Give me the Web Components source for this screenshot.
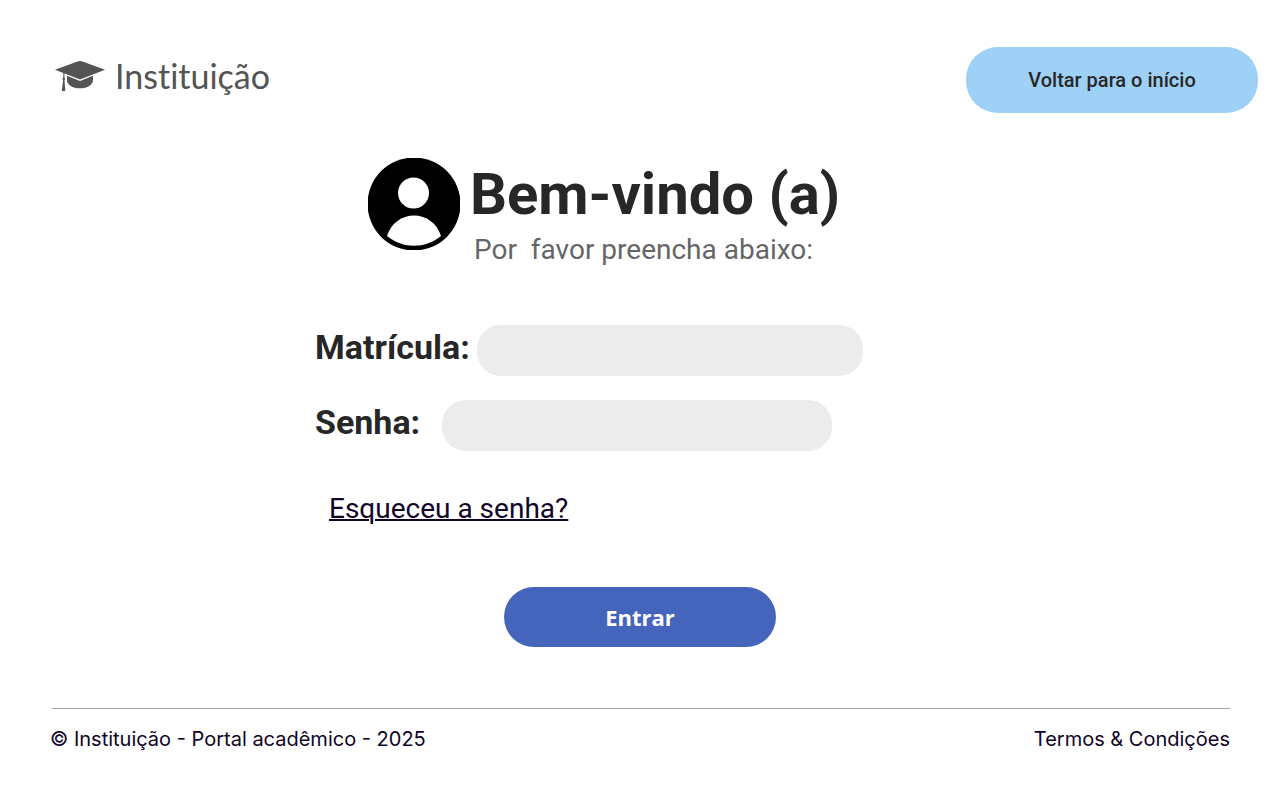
<!DOCTYPE html>
<html lang="pt-BR">
<head>
<meta charset="utf-8">
<meta name="viewport" content="width=device-width, initial-scale=1">
<title>Portal acadêmico</title>
<style>
  body { margin: 0; background: #fff; color: #272727; font-family: Roboto, "Liberation Sans", sans-serif; }
</style>
</head>
<body>
<portal-page>
  <brand-logo slot="brand">Instituição</brand-logo>
  <pill-button slot="action">Voltar para o início</pill-button>
  <login-panel>
    <welcome-banner slot="welcome">
      Bem-vindo (a)
      <span slot="hint">Por&nbsp; favor preencha abaixo:</span>
    </welcome-banner>
    <form-field name="matricula" type="text">Matrícula:</form-field>
    <form-field name="senha" type="password">Senha:</form-field>
    <text-link slot="help" href="#recuperar">Esqueceu a senha?</text-link>
    <pill-button slot="submit" variant="primary">Entrar</pill-button>
  </login-panel>
  <page-footer slot="footer">
    © Instituição - Portal acadêmico - 2025
    <text-link slot="terms" variant="plain" href="#termos">Termos &amp; Condições</text-link>
  </page-footer>
</portal-page>

<script>
function define(name, markup, setup) {
  const template = document.createElement('template');
  template.innerHTML = markup;
  customElements.define(name, class extends HTMLElement {
    constructor() {
      super();
      this.attachShadow({ mode: 'open' }).append(template.content.cloneNode(true));
    }
    connectedCallback() {
      if (setup) setup(this, this.shadowRoot);
    }
  });
}

define('portal-page', `
  <style>
    :host { display: flex; flex-direction: column; min-height: 100vh; }
    header { display: flex; justify-content: space-between; align-items: flex-start; padding: 47px 22px 0 55px; }
    main { display: flex; justify-content: center; padding: 45px 24px 61px; }
  </style>
  <header><slot name="brand"></slot><slot name="action"></slot></header>
  <main><slot></slot></main>
  <slot name="footer"></slot>`);

define('brand-logo', `
  <style>
    :host { display: flex; align-items: center; gap: 10px; height: 58px; color: #545454;
      font: 34px/40px Lato, sans-serif; font-variant-ligatures: none; }
    svg { display: block; width: 50px; height: 30px; }
  </style>
  <svg viewBox="0 0 50 30" fill="currentColor" aria-hidden="true">
    <path d="M0 8.7 22.5.5Q25-.4 27.5.5L50 8.7 25 18.5Z"/>
    <path d="M12 14.8 25 20 38 14.8V19c0 4.8-5.5 8.3-13 8.3S12 23.800 12 19Z"/>
    <path d="M8.300 11 9.400 11.500V16.500c.9.6.9 1.900.1 2.500L10.300 30H6.800L8.100 19c-.8-.7-.8-1.900.2-2.500Z"/>
  </svg>
  <span><slot></slot></span>`);

define('pill-button', `
  <style>
    :host { display: block; --bg: #9fd0f6; --fg: #272727; }
    :host([variant="primary"]) { --bg: #4564bc; --fg: #fff; }
    button { display: block; width: 292px; height: 66px; padding: 0; border: 0; border-radius: 32px;
      background: var(--bg); color: var(--fg); font: 500 20px/24px Roboto, sans-serif; cursor: pointer; }
    :host([variant="primary"]) button { width: 272px; height: 60px; border-radius: 30px; font: 700 22px/28px "Open Sans", sans-serif; }
  </style>
  <button type="button"><slot></slot></button>`);

define('login-panel', `
  <style>
    :host { display: block; width: 100%; max-width: 650px; }
    form { display: flex; flex-direction: column; margin: 0; }
    .fields { display: flex; flex-direction: column; gap: 24px; padding-top: 55px; }
    .help { padding: 40px 14px 0; }
    .submit { display: flex; justify-content: center; padding-top: 60px; }
  </style>
  <form>
    <slot name="welcome"></slot>
    <div class="fields"><slot></slot></div>
    <div class="help"><slot name="help"></slot></div>
    <div class="submit"><slot name="submit"></slot></div>
  </form>`);

define('welcome-banner', `
  <style>
    :host { display: flex; align-items: flex-start; gap: 10px; padding-left: 53px; }
    svg { display: block; flex: none; width: 92px; height: 92px; }
    h1 { margin: 0; font-size: 58px; line-height: 72px; font-weight: 700; white-space: nowrap; }
    p { margin: 0; padding-left: 4px; color: #666; font-size: 28px; line-height: 40px; }
  </style>
  <svg viewBox="0 0 92 92" aria-hidden="true">
    <circle cx="46" cy="46" r="46.500" fill="#000"/>
    <circle cx="45.500" cy="35" r="15.500" fill="#fff"/>
    <path d="M19 78C23 65 34 57.500 46 57.500S69 65 73 78C57 91 35 91 19 78Z" fill="#fff"/>
  </svg>
  <div>
    <h1><slot></slot></h1>
    <p><slot name="hint"></slot></p>
  </div>`);

define('form-field', `
  <style>
    :host { display: flex; align-items: flex-start; --label: 162px; --field: 386px; }
    :host([name="senha"]) { --label: 127px; --field: 390px; }
    label { flex: none; width: var(--label); font-size: 34px; line-height: 44px; font-weight: 700; white-space: nowrap; }
    input { box-sizing: border-box; width: var(--field); min-width: 0; height: 51px; padding: 0 24px; border: 0;
      border-radius: 24px; background: #ececec; color: inherit; font: 24px/32px Roboto, sans-serif; }
  </style>
  <label for="control"><slot></slot></label>
  <input id="control">`, (host, root) => {
    const input = root.querySelector('input');
    input.type = host.getAttribute('type');
    input.name = host.getAttribute('name');
  });

define('text-link', `
  <style>
    :host { display: block; }
    a { color: #100428; font-size: 28px; line-height: 36px; text-decoration-thickness: 2px; }
    :host([variant="plain"]) a { font: inherit; text-decoration: none; }
  </style>
  <a><slot></slot></a>`, (host, root) => {
    root.querySelector('a').href = host.getAttribute('href');
  });

define('page-footer', `
  <style>
    :host { display: block; padding: 0 50px; color: #100428; font: 20px/28px Inter, sans-serif; }
    hr { height: 1px; margin: 0 0 0 2px; border: 0; background: #a6a3b0; }
    .row { display: flex; flex-wrap: wrap; justify-content: space-between; gap: 8px 24px; padding: 16px 0 32px; }
  </style>
  <footer>
    <hr>
    <div class="row"><span><slot></slot></span><slot name="terms"></slot></div>
  </footer>`);
</script>
</body>
</html>
